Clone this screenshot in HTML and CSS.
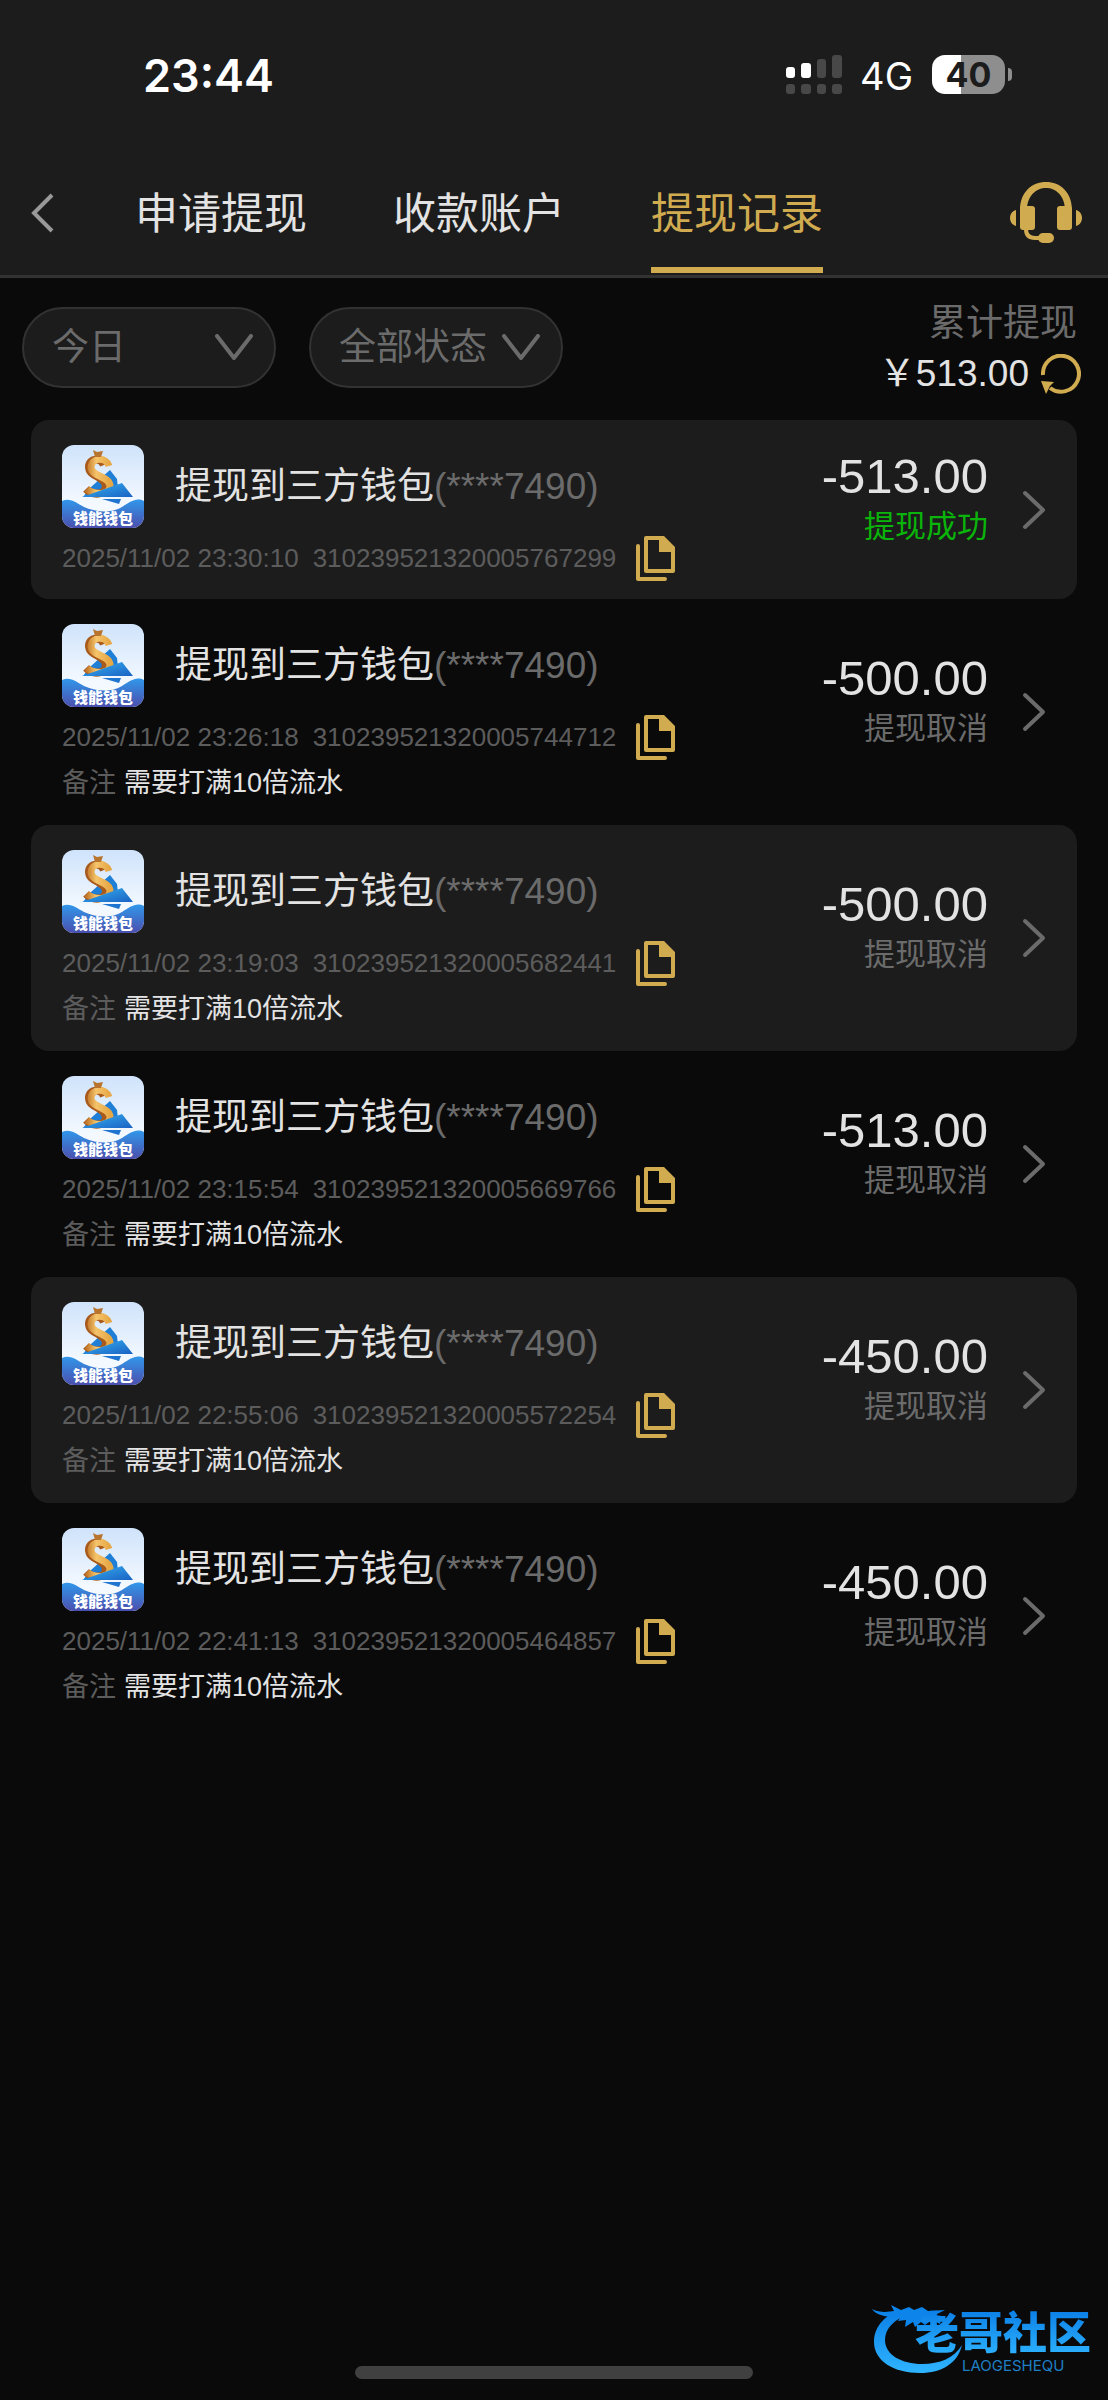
FILE: index.html
```html
<!DOCTYPE html>
<html lang="zh-CN">
<head>
<meta charset="utf-8">
<meta name="viewport" content="width=device-width, initial-scale=1">
<title>提现记录</title>
<link rel="stylesheet" href="styles.css">
</head>
<body>
<svg class="defs" aria-hidden="true">
  <defs>
    <linearGradient id="sky" x1="0" y1="0" x2="0" y2="1"><stop offset="0" stop-color="#cfe3fb"/><stop offset=".7" stop-color="#f4f9ff"/></linearGradient>
    <linearGradient id="wave" x1="0" y1="0" x2="0" y2="1"><stop offset="0" stop-color="#3197ea"/><stop offset="1" stop-color="#4b4fae"/></linearGradient>
    <linearGradient id="plane" x1="0" y1="0" x2="1" y2="1"><stop offset="0" stop-color="#37b2f0"/><stop offset="1" stop-color="#1a62c4"/></linearGradient>
    <linearGradient id="gold" x1="0" y1="0" x2="1" y2="0"><stop offset="0" stop-color="#c47a2a"/><stop offset=".4" stop-color="#f5c46b"/><stop offset="1" stop-color="#e6a745"/></linearGradient>
    <linearGradient id="dragon" x1="0" y1="0" x2="0" y2="1"><stop offset="0" stop-color="#0b7fe6"/><stop offset="1" stop-color="#2fb4ff"/></linearGradient>
  </defs>
  <symbol id="wallet" viewBox="0 0 82 83">
    <rect width="82" height="83" fill="url(#sky)"/>
    <path d="M48 25l7 9 1 9-5 5-30 4 8-10z" fill="#1f7fd6"/>
    <path d="M42 20c-3-8-15-7-15 2 0 10 16 9 17 19 0 9-13 10-20 3" fill="none" stroke="#a85a1c" stroke-width="8"/>
    <path d="M47 21c-3-9-17-9-18 1 0 10 19 9 19 19 0 9-15 10-23 3" fill="none" stroke="url(#gold)" stroke-width="7"/>
    <path d="M20 52L60 38l11 14z" fill="url(#plane)"/>
    <path d="M40 54h19l-2 5z" fill="#1f74d0"/>
    <path d="M31 5l4 2 6-1-2 6h-6z" fill="#b9752d"/>
    <path d="M0 56c8-4 15 2 22 6 14 6 28 6 38 0 8-5 14-10 22-6v27H0z" fill="url(#wave)"/>
  </symbol>
  <symbol id="copy" viewBox="0 0 39 45">
    <path d="M2 10v33h27" fill="none" stroke="#d0ab50" stroke-width="4" stroke-linecap="round" stroke-linejoin="round"/>
    <path fill-rule="evenodd" d="M10 0h18l11 11v24q0 2-2 2H10q-2 0-2-2V2q0-2 2-2zm2 4v29h23V16H23V4z" fill="#d0ab50"/>
  </symbol>
  <symbol id="next" viewBox="0 0 24 40">
    <path d="M3 3l18 17L3 37" fill="none" stroke="#6b6b6b" stroke-width="4" stroke-linecap="round" stroke-linejoin="round"/>
  </symbol>
</svg>

<header class="top">
  <div class="status-bar">
    <time class="clock">23:44</time>
    <div class="indicators">
      <svg width="56" height="39" viewBox="0 0 56 39" aria-hidden="true">
        <g fill="#fff"><rect y="12" width="9" height="11" rx="3"/><rect x="15" y="8" width="10" height="15" rx="3"/></g>
        <g fill="#484848"><rect x="31" y="4" width="9" height="19" rx="3"/><rect x="46" width="10" height="23" rx="3"/><rect y="29" width="9" height="10" rx="3"/><rect x="15" y="29" width="10" height="10" rx="3"/><rect x="31" y="29" width="9" height="10" rx="3"/><rect x="46" y="29" width="10" height="10" rx="3"/></g>
      </svg>
      <span class="network">4G</span>
      <span class="battery">40</span>
    </div>
  </div>
  <nav class="nav">
    <button class="icon-button back" aria-label="返回">
      <svg width="24" height="40" viewBox="0 0 24 40"><path d="M21 2L3 20l18 18" fill="none" stroke="#999" stroke-width="4"/></svg>
    </button>
    <div class="tabs">
      <a class="tab" href="#apply">申请提现</a>
      <a class="tab" href="#account">收款账户</a>
      <a class="tab active" href="#records" aria-current="page">提现记录</a>
    </div>
    <button class="icon-button" aria-label="客服">
      <svg width="72" height="62" viewBox="0 0 72 62" fill="#d0ab50">
        <path d="M10 28C10 10 22 0 36 0s26 10 26 28h-7C55 14 46 6 36 6S17 14 17 28z"/>
        <rect x="10" y="24" width="15" height="24" rx="3"/><rect x="47" y="24" width="15" height="24" rx="3"/>
        <path d="M6 28v16C-2 42-2 30 6 28zM66 28v16c8-2 8-14 0-16z"/>
        <path d="M16 47q0 9 9 9h6" fill="none" stroke="#d0ab50" stroke-width="4"/>
        <rect x="28" y="51" width="16" height="10" rx="5"/>
      </svg>
    </button>
  </nav>
</header>

<main>
  <section class="filters">
    <div class="selects">
      <div class="pill">
        <select aria-label="日期"><option>今日</option></select>
        <svg width="38" height="28" viewBox="0 0 38 28" aria-hidden="true"><path d="M2 2l17 22L36 2" fill="none" stroke="#6b6b6b" stroke-width="4" stroke-linecap="round" stroke-linejoin="round"/></svg>
      </div>
      <div class="pill">
        <select aria-label="状态"><option>全部状态</option></select>
        <svg width="38" height="28" viewBox="0 0 38 28" aria-hidden="true"><path d="M2 2l17 22L36 2" fill="none" stroke="#6b6b6b" stroke-width="4" stroke-linecap="round" stroke-linejoin="round"/></svg>
      </div>
    </div>
    <div class="summary">
      <span class="summary-label">累计提现</span>
      <div class="summary-total">
        <span>￥513.00</span>
        <button class="icon-button" aria-label="刷新">
          <svg width="40" height="40" viewBox="0 0 40 40"><path d="M2 21A18 18 0 1 1 9 34" fill="none" stroke="#d0ab50" stroke-width="4"/><path d="M0 27l13 1-4 4-4 8z" fill="#d0ab50"/></svg>
        </button>
      </div>
    </div>
  </section>

  <ul class="records">
    <li class="record">
      <div class="info">
        <div class="head"><div class="logo"><svg><use href="#wallet"/></svg><span>钱能钱包</span></div><p class="title">提现到三方钱包<span>(****7490)</span></p></div>
        <div class="meta"><time>2025/11/02 23:30:10</time><span>310239521320005767299</span><button class="icon-button copy" aria-label="复制"><svg><use href="#copy"/></svg></button></div>
      </div>
      <div class="result"><strong>-513.00</strong><span class="success">提现成功</span></div>
      <svg class="next"><use href="#next"/></svg>
    </li>
    <li class="record">
      <div class="info">
        <div class="head"><div class="logo"><svg><use href="#wallet"/></svg><span>钱能钱包</span></div><p class="title">提现到三方钱包<span>(****7490)</span></p></div>
        <div class="meta"><time>2025/11/02 23:26:18</time><span>310239521320005744712</span><button class="icon-button copy" aria-label="复制"><svg><use href="#copy"/></svg></button></div>
        <p class="note"><span>备注</span>需要打满10倍流水</p>
      </div>
      <div class="result"><strong>-500.00</strong><span>提现取消</span></div>
      <svg class="next"><use href="#next"/></svg>
    </li>
    <li class="record">
      <div class="info">
        <div class="head"><div class="logo"><svg><use href="#wallet"/></svg><span>钱能钱包</span></div><p class="title">提现到三方钱包<span>(****7490)</span></p></div>
        <div class="meta"><time>2025/11/02 23:19:03</time><span>310239521320005682441</span><button class="icon-button copy" aria-label="复制"><svg><use href="#copy"/></svg></button></div>
        <p class="note"><span>备注</span>需要打满10倍流水</p>
      </div>
      <div class="result"><strong>-500.00</strong><span>提现取消</span></div>
      <svg class="next"><use href="#next"/></svg>
    </li>
    <li class="record">
      <div class="info">
        <div class="head"><div class="logo"><svg><use href="#wallet"/></svg><span>钱能钱包</span></div><p class="title">提现到三方钱包<span>(****7490)</span></p></div>
        <div class="meta"><time>2025/11/02 23:15:54</time><span>310239521320005669766</span><button class="icon-button copy" aria-label="复制"><svg><use href="#copy"/></svg></button></div>
        <p class="note"><span>备注</span>需要打满10倍流水</p>
      </div>
      <div class="result"><strong>-513.00</strong><span>提现取消</span></div>
      <svg class="next"><use href="#next"/></svg>
    </li>
    <li class="record">
      <div class="info">
        <div class="head"><div class="logo"><svg><use href="#wallet"/></svg><span>钱能钱包</span></div><p class="title">提现到三方钱包<span>(****7490)</span></p></div>
        <div class="meta"><time>2025/11/02 22:55:06</time><span>310239521320005572254</span><button class="icon-button copy" aria-label="复制"><svg><use href="#copy"/></svg></button></div>
        <p class="note"><span>备注</span>需要打满10倍流水</p>
      </div>
      <div class="result"><strong>-450.00</strong><span>提现取消</span></div>
      <svg class="next"><use href="#next"/></svg>
    </li>
    <li class="record">
      <div class="info">
        <div class="head"><div class="logo"><svg><use href="#wallet"/></svg><span>钱能钱包</span></div><p class="title">提现到三方钱包<span>(****7490)</span></p></div>
        <div class="meta"><time>2025/11/02 22:41:13</time><span>310239521320005464857</span><button class="icon-button copy" aria-label="复制"><svg><use href="#copy"/></svg></button></div>
        <p class="note"><span>备注</span>需要打满10倍流水</p>
      </div>
      <div class="result"><strong>-450.00</strong><span>提现取消</span></div>
      <svg class="next"><use href="#next"/></svg>
    </li>
  </ul>
</main>

<div class="home-indicator"></div>

<div class="watermark">
  <svg width="92" height="76" viewBox="0 0 92 76" aria-hidden="true">
    <path d="M33 12C15 15 3 28 3 44c0 19 20 31 46 31 22 0 38-10 42-28-8 13-22 19-40 19-20 0-37-9-37-24 0-12 10-21 24-26z" fill="url(#dragon)"/>
    <path d="M1 11c8 4 16 3 22 2l-3-6 10 5 8-3 5 3 8-3 6 4 17-1-10 5 7 1-2 8-8-4-7 5-4-3-6 5-2-5-8 5 1-7-8 1 3-5-12 1C12 18 4 16 1 11z" fill="#0c84ea"/>
  </svg>
  <div class="watermark-text">
    <span class="watermark-name">老哥社区</span>
    <span class="watermark-latin">LAOGESHEQU</span>
  </div>
</div>
</body>
</html>
```
FILE: styles.css
```css
* { box-sizing: border-box; }

body {
  margin: 0;
  min-height: 100vh;
  display: flex;
  flex-direction: column;
  position: relative;
  background: #0a0a0a;
  color: #e3e3e3;
  font-family: "Liberation Sans", "Noto Sans CJK SC", sans-serif;
}

p, ul { margin: 0; padding: 0; }
ul { list-style: none; }
svg { display: block; flex: none; }

.defs { position: absolute; width: 0; height: 0; }

.icon-button {
  flex: none;
  padding: 0;
  border: 0;
  background: none;
}

/* Header */
.top {
  background: #1c1c1c;
  border-bottom: 3px solid #323232;
}

.status-bar {
  display: flex;
  justify-content: space-between;
  align-items: center;
  height: 148px;
  padding: 0 96px 0 143px;
  color: #fff;
  font-family: Inter, sans-serif;
}

.clock { padding-top: 2px; font-size: 45px; font-weight: 600; }

.indicators { display: flex; align-items: center; }
.network { margin: 4px 19px 0 18px; font-size: 38px; font-weight: 400; }

.battery {
  position: relative;
  width: 73px;
  height: 39px;
  margin-right: 7px;
  border-radius: 13px;
  background: linear-gradient(90deg, #fff 40%, #8e8e8e 40%);
  color: #1c1c1c;
  font-size: 34px;
  font-weight: 700;
  line-height: 39px;
  text-align: center;
}

.battery::after {
  content: "";
  position: absolute;
  top: 13px;
  right: -7px;
  width: 4px;
  height: 13px;
  border-radius: 0 4px 4px 0;
  background: #8e8e8e;
}

.nav {
  display: flex;
  align-items: center;
  height: 127px;
  padding: 0 26px 0 31px;
}

.nav .icon-button { margin-top: 3px; }

.tabs {
  flex: 1;
  align-self: stretch;
  display: flex;
  gap: 86px;
  padding-left: 80px;
}

.tab {
  padding-top: 5px;
  color: #e3e3e3;
  font-size: 43px;
  line-height: 122px;
  text-decoration: none;
}

.tab.active {
  color: #d0ab50;
  background: linear-gradient(#d0ab50, #d0ab50) 0 119px / 100% 6px no-repeat;
}

/* Filters */
.filters {
  display: flex;
  justify-content: space-between;
  padding: 24px 27px 18px 22px;
}

.selects { display: flex; align-items: flex-start; gap: 33px; padding-top: 5px; }

.pill {
  display: flex;
  align-items: center;
  width: 254px;
  height: 81px;
  padding: 0 21px 0 28px;
  border: 2px solid #323232;
  border-radius: 41px;
  background: #1c1c1c;
}

.pill select {
  appearance: none;
  flex: 1;
  min-width: 0;
  padding: 0;
  border: 0;
  background: none;
  color: #6b6b6b;
  font-family: inherit;
  font-size: 37px;
}

.summary { font-size: 37px; text-align: right; }
.summary-label { display: block; padding-right: 4px; color: #6b6b6b; line-height: 44px; }
.summary-total {
  display: flex;
  justify-content: flex-end;
  align-items: center;
  gap: 12px;
  line-height: 56px;
}

/* Records */
.records { padding: 0 31px; }

.record {
  display: flex;
  align-items: center;
  padding: 25px 31px 18px 31px;
  border-radius: 18px;
}

.record:nth-child(odd) { background: #1c1c1c; }

.info { flex: 1; }

.head { display: flex; align-items: center; gap: 31px; height: 83px; }

.logo {
  position: relative;
  width: 82px;
  height: 83px;
  overflow: hidden;
  border-radius: 12px;
}

.logo svg { width: 82px; height: 83px; }

.logo span {
  position: absolute;
  right: 0;
  bottom: 2px;
  left: 0;
  color: #fff;
  font-size: 15px;
  font-weight: 900;
  line-height: 15px;
  text-align: center;
}

.title { font-size: 37px; line-height: 54px; }
.title span { color: #6b6b6b; }

.meta {
  display: flex;
  align-items: center;
  height: 45px;
  margin-top: 8px;
  color: #5c5c5c;
  font-size: 26px;
}

.meta time { margin-right: 14px; }
.copy { margin-left: 20px; }
.copy svg { width: 39px; height: 45px; }

.note { font-size: 27px; line-height: 47px; }
.note span { margin-right: 8px; color: #5c5c5c; }

.result {
  display: flex;
  flex-direction: column;
  align-items: flex-end;
  margin-right: 34px;
  padding-bottom: 31px;
  color: #6b6b6b;
  font-size: 31px;
  line-height: 44px;
}

.result strong { color: #e3e3e3; font-size: 49px; font-weight: 400; line-height: 58px; }
.result .success { color: #0ab40a; }

.next { width: 24px; height: 40px; margin-bottom: 7px; }

/* Page footer */
.home-indicator {
  align-self: center;
  width: 36%;
  height: 13px;
  margin-top: auto;
  margin-bottom: 21px;
  border-radius: 7px;
  background: #404040;
}

/* Community mark floating over the page corner */
.watermark {
  position: absolute;
  right: 17px;
  bottom: 26px;
  display: flex;
}

.watermark-text {
  display: flex;
  flex-direction: column;
  margin-left: -48px;
  padding-top: 12px;
}

.watermark-name {
  background: linear-gradient(#0b7fe6, #2fb4ff);
  background-clip: text;
  color: transparent;
  font-size: 44px;
  font-weight: 900;
  line-height: 48px;
}

.watermark-latin {
  padding-left: 47px;
  color: #1f7fc4;
  font-family: Inter, sans-serif;
  font-size: 15px;
  line-height: 16px;
}
```
